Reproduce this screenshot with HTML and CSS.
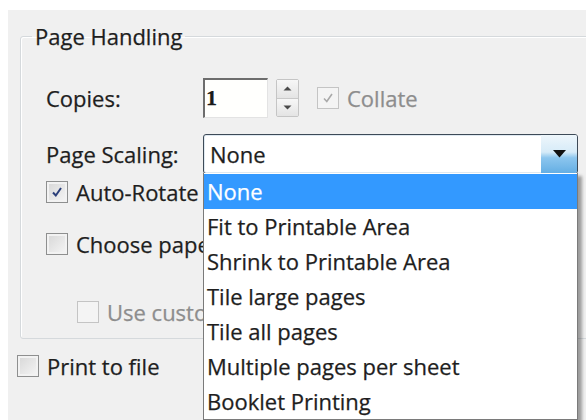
FILE: index.html
```html
<!DOCTYPE html>
<html lang="en">
<head>
<meta charset="utf-8">
<title>Print</title>
<link rel="stylesheet" href="styles.css">
</head>
<body>
<div class="window">
  <fieldset class="group">
    <legend>Page Handling</legend>

    <div class="row row-copies">
      <span class="label">Copies:</span>
      <div class="copies-ctl">
        <div class="spin-field">1</div>
        <div class="spinner">
          <span class="spin-btn"><svg width="9" height="5" viewBox="0 0 9 5"><path d="M0.5 4.5 L4.5 0.5 L8.5 4.5Z" fill="#4a4a4a"/></svg></span>
          <span class="spin-btn"><svg width="9" height="5" viewBox="0 0 9 5"><path d="M0.5 0.5 L4.5 4.5 L8.5 0.5Z" fill="#4a4a4a"/></svg></span>
        </div>
        <label class="check is-disabled">
          <span class="box"><svg width="14" height="14" viewBox="0 0 14 14"><path d="M3 7.5 L5.8 10.5 L11 3" fill="none" stroke="#a9a9a9" stroke-width="1.6"/></svg></span>
          <span class="text">Collate</span>
        </label>
      </div>
    </div>

    <div class="row row-scaling">
      <span class="label">Page Scaling:</span>
      <div class="combo">
        <div class="select">
          <span class="select-value">None</span>
          <span class="select-btn"><svg width="13" height="8" viewBox="0 0 13 8"><path d="M0 0 H13 L6.5 7.5Z" fill="#111"/></svg></span>
        </div>
        <ul class="listbox">
          <li class="is-selected">None</li>
          <li>Fit to Printable Area</li>
          <li>Shrink to Printable Area</li>
          <li>Tile large pages</li>
          <li>Tile all pages</li>
          <li>Multiple pages per sheet</li>
          <li>Booklet Printing</li>
        </ul>
      </div>
    </div>

    <label class="check row row-rotate">
      <span class="box"><svg width="14" height="14" viewBox="0 0 14 14"><path d="M3 7.5 L5.8 10.5 L11 3" fill="none" stroke="#2b3f7a" stroke-width="2"/></svg></span>
      <span class="text">Auto-Rotate and Center</span>
    </label>

    <label class="check row row-source">
      <span class="box"></span>
      <span class="text">Choose paper source by PDF page size</span>
    </label>

    <label class="check row row-custom is-disabled">
      <span class="box"></span>
      <span class="text">Use custom paper size when needed</span>
    </label>
  </fieldset>

  <label class="check row row-file">
    <span class="box"></span>
    <span class="text">Print to file</span>
  </label>
</div>
</body>
</html>
```

FILE: styles.css
```css
html, body {
  margin: 0;
  padding: 0;
  background: #ffffff;
  overflow: hidden;
}

body {
  font-family: "Open Sans", "Noto Sans", "DejaVu Sans", sans-serif;
  font-size: 22px;
  color: #1e1e1e;
  -webkit-text-stroke: 0.25px currentColor;
}

.window {
  margin: 10px 0 0 8px;
  height: 410px;
  background: #f0f0f0;
  padding-top: 13px;
  box-sizing: border-box;
}

/* group box */
.group {
  margin: 0 0 0 12px;
  width: 620px;
  padding: 28px 0 10px 25px;
  border: 1px solid #d5d9dc;
  border-radius: 3px;
  box-shadow: inset 1px 1px 0 #ffffff;
  display: flex;
  flex-direction: column;
  box-sizing: border-box;
}

.group legend {
  padding: 0 3px;
  margin-left: -14px;
  line-height: 26px;
}

.row {
  display: flex;
  align-items: center;
}

.label {
  width: 157px;
  flex: none;
}

/* copies row */
.row-copies { height: 42px; }

.copies-ctl {
  display: flex;
  align-items: center;
}

.spin-field {
  width: 65px;
  height: 40px;
  box-sizing: border-box;
  background: #fffffd;
  border-top: 2px solid #6d6d6d;
  border-left: 2px solid #6d6d6d;
  border-right: 1px solid #e3e3e3;
  border-bottom: 1px solid #e3e3e3;
  font-family: "Liberation Serif", serif;
  font-size: 22px;
  font-weight: bold;
  line-height: 36px;
  padding-left: 1px;
  color: #1a1a1a;
}

.spinner {
  margin-left: 8px;
  width: 23px;
  height: 38px;
  display: flex;
  flex-direction: column;
  border: 1px solid #c5c5c5;
  border-radius: 2px;
  box-sizing: border-box;
  background: #f4f4f4;
}

.spin-btn {
  flex: 1;
  display: flex;
  align-items: center;
  justify-content: center;
  background: linear-gradient(#f7f7f7, #e4e4e4);
}

.spin-btn + .spin-btn { border-top: 1px solid #c9c9c9; }

.copies-ctl .check { margin-left: 18px; }

/* scaling row */
.row-scaling { margin-top: 15px; height: 40px; }

.combo {
  position: relative;
  width: 375px;
}

.select {
  height: 40px;
  box-sizing: border-box;
  border: 1px solid #3d4a57;
  border-radius: 3px;
  background: #ffffff;
  display: flex;
  align-items: center;
  box-shadow: inset 0 0 0 1px #dfe9f1;
}

.select-value {
  flex: 1;
  padding-left: 6px;
}

.select-btn {
  width: 36px;
  align-self: stretch;
  display: flex;
  align-items: center;
  justify-content: center;
  background: linear-gradient(#eef6fb 0%, #d6ebf8 45%, #8cc6ee 60%, #64aee4 100%);
  border-radius: 0 2px 2px 0;
}

/* dropdown list, opened over the dialog */
.listbox {
  position: absolute;
  left: 0;
  top: 39px;
  width: 375px;
  margin: 0;
  padding: 1px 0 0;
  list-style: none;
  background: #ffffff;
  border: 1px solid #7a7a7a;
  border-top: none;
  box-sizing: border-box;
  box-shadow: 4px 3px 3px rgba(0, 0, 0, 0.35);
  z-index: 2;
}

.listbox li {
  height: 35px;
  line-height: 34px;
  padding-left: 3px;
  white-space: nowrap;
}

.listbox li.is-selected {
  background: #3399ff;
  color: #ffffff;
}

/* check boxes */
.check {
  display: flex;
  align-items: center;
  white-space: nowrap;
}

.check .box {
  width: 22px;
  height: 22px;
  box-sizing: border-box;
  border: 1px solid #8e8f8f;
  background: linear-gradient(135deg, #d6d6d6, #f6f6f6);
  box-shadow: inset 0 0 0 2px #f2f2f2;
  display: flex;
  align-items: center;
  justify-content: center;
  flex: none;
}

.check .text { margin-left: 8px; }

.check.is-disabled .box {
  border-color: #c4c4c4;
  background: #f4f4f4;
  box-shadow: none;
}

.check.is-disabled .text { color: #8d8d8d; }

.row-rotate { margin-top: 2px; height: 32px; }
.row-source { margin-top: 20px; height: 32px; }
.row-custom { margin-top: 36px; height: 32px; margin-left: 31px; }

.row-file {
  margin: 11px 0 0 9px;
  height: 32px;
}
```
